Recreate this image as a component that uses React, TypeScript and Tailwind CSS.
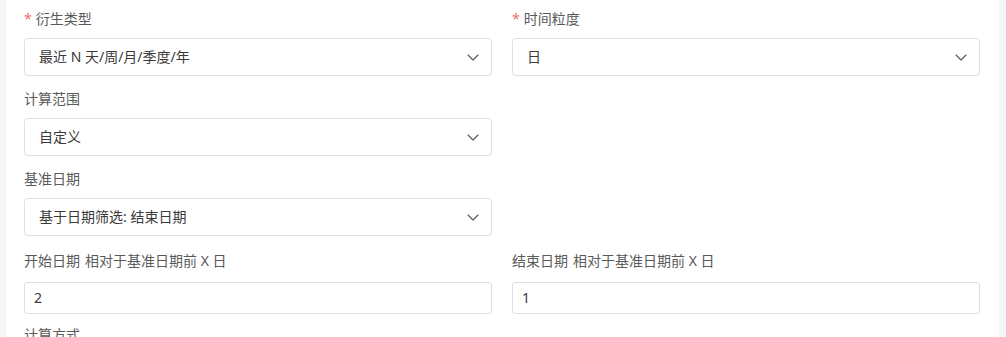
import React from "react";

type Field = {
  label: string;
  note?: string;
  required?: boolean;
  value: string;
  kind: "select" | "input";
};

const rows: (Field | null)[][] = [
  [
    { label: "衍生类型", required: true, value: "最近 N 天/周/月/季度/年", kind: "select" },
    { label: "时间粒度", required: true, value: "日", kind: "select" },
  ],
  [{ label: "计算范围", value: "自定义", kind: "select" }, null],
  [{ label: "基准日期", value: "基于日期筛选: 结束日期", kind: "select" }, null],
  [
    { label: "开始日期", note: "相对于基准日期前 X 日", value: "2", kind: "input" },
    { label: "结束日期", note: "相对于基准日期前 X 日", value: "1", kind: "input" },
  ],
  [{ label: "计算方式", value: "", kind: "select" }, null],
];

const Chevron = () => (
  <svg width="14" height="14" viewBox="0 0 14 14" fill="none" className="text-[#555]">
    <path d="M2 5 L7 10 L12 5" stroke="currentColor" strokeWidth="1.1" strokeLinecap="round" strokeLinejoin="round" />
  </svg>
);

const FormItem = ({ field }: { field: Field }) => (
  <div className="flex flex-col">
    <div
      className={
        "h-[22px] leading-[22px] text-sm text-[#5a5a5a] flex items-center " +
        (field.kind === "input" ? "mb-[10px]" : "mb-[8px]")
      }
    >
      {field.required && <span className="text-[#f56c6c] mr-[4px]">*</span>}
      <span>{field.label}</span>
      {field.note && <span className="ml-[5px]">{field.note}</span>}
    </div>
    {field.kind === "select" ? (
      <div className="h-[38px] rounded-[4px] border border-[#dcdfe6] bg-white flex items-center justify-between pl-[14px] pr-[11px] text-sm text-[#3a3a3a]">
        <span>{field.value}</span>
        <Chevron />
      </div>
    ) : (
      <div className="h-[32px] rounded-[3px] border border-[#dcdfe6] bg-white flex items-center px-[9px] text-sm text-[#3a3a3a]">
        {field.value}
      </div>
    )}
  </div>
);

export default function App() {
  return (
    <div
      className="w-[1006px] h-[337px] overflow-hidden bg-[#f4f6f9] flex"
      style={{ fontFamily: '"Noto Sans", "Noto Sans CJK SC", sans-serif' }}
    >
      <div className="ml-[6px] w-[993px] bg-white pl-[18px] pr-[19px] pt-[8px] flex flex-col">
        <div className="grid grid-cols-2 gap-x-[20px] mb-[12px]">
          <FormItem field={rows[0][0]!} />
          <FormItem field={rows[0][1]!} />
        </div>
        <div className="grid grid-cols-2 gap-x-[20px] mb-[12px]">
          <FormItem field={rows[1][0]!} />
          <div />
        </div>
        <div className="grid grid-cols-2 gap-x-[20px] mb-[14px]">
          <FormItem field={rows[2][0]!} />
          <div />
        </div>
        <div className="grid grid-cols-2 gap-x-[20px] mb-[10px]">
          <FormItem field={rows[3][0]!} />
          <FormItem field={rows[3][1]!} />
        </div>
        <div className="grid grid-cols-2 gap-x-[20px]">
          <FormItem field={rows[4][0]!} />
          <div />
        </div>
      </div>
    </div>
  );
}
